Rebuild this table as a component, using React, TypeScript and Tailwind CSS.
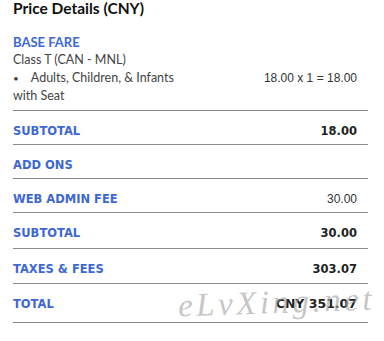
import React from "react";

const label = "font-['DejaVu_Sans',sans-serif] font-bold text-[11.5px] leading-[18px] text-[#3d68d4]";
const boldVal = "font-['DejaVu_Sans',sans-serif] font-bold text-[11.5px] leading-[18px] text-[#222]";
const regVal = "font-['Liberation_Sans',Arial,sans-serif] text-[12px] leading-[18px] text-[#333]";

function Row({ name, value, kind, pb = "pb-[5px]" }: { name: string; value?: string; kind?: "bold" | "reg" | "total"; pb?: string }) {
  return (
    <div className={`flex items-baseline justify-between border-b border-[#8a8a8a] pt-[11px] ${pb} pr-[11px]`}>
      <span className={label}>{name}</span>
      {value ? (
        <span className={kind === "reg" ? regVal : kind === "total" ? "font-['DejaVu_Sans',sans-serif] font-bold text-[12.5px] leading-[18px] text-[#222]" : boldVal}>
          {value}
        </span>
      ) : null}
    </div>
  );
}

export default function App() {
  return (
    <div className="relative w-[384px] h-[341px] bg-white overflow-hidden">
      <div className="pl-[13px] w-[368px]">
        <div className="font-['Lato',sans-serif] font-bold text-[15.5px] leading-[16px] text-[#111] mb-[17px]">
          Price Details (CNY)
        </div>
        <div className="border-b border-[#8a8a8a] pb-[5px]">
          <div className="font-['Lato',sans-serif] font-bold text-[13px] leading-[18px] text-[#3d68d4]">BASE FARE</div>
          <div className="font-['Lato',sans-serif] text-[12.5px] leading-[18px] text-[#444]">Class T (CAN - MNL)</div>
          <div className="flex pr-[11px]">
            <div className="w-[182px] font-['Lato',sans-serif] text-[12.5px] leading-[18px] text-[#444]">
              <span className="text-[10px] mr-[12px]">•</span>Adults, Children, &amp; Infants with Seat
            </div>
            <div className={`flex-1 text-right ${regVal}`}>18.00 x 1 = 18.00</div>
          </div>
        </div>
        <Row name="SUBTOTAL" value="18.00" kind="bold" pb="pb-[4px]" />
        <Row name="ADD ONS" pb="pb-[4px]" />
        <Row name="WEB ADMIN FEE" value="30.00" kind="reg" pb="pb-[4px]" />
        <Row name="SUBTOTAL" value="30.00" kind="bold" pb="pb-[6px]" />
        <Row name="TAXES & FEES" value="303.07" kind="bold" pb="pb-[5px]" />
        <Row name="TOTAL" value="CNY 351.07" kind="total" pb="pb-[9px]" />
      </div>
      <div className="absolute left-[178px] top-[284px] font-['Liberation_Serif',serif] italic text-[33px] leading-[36px] tracking-[3.5px] text-[rgba(160,160,160,0.6)] -rotate-[2deg] pointer-events-none select-none">
        eLvXing.net
      </div>
    </div>
  );
}
